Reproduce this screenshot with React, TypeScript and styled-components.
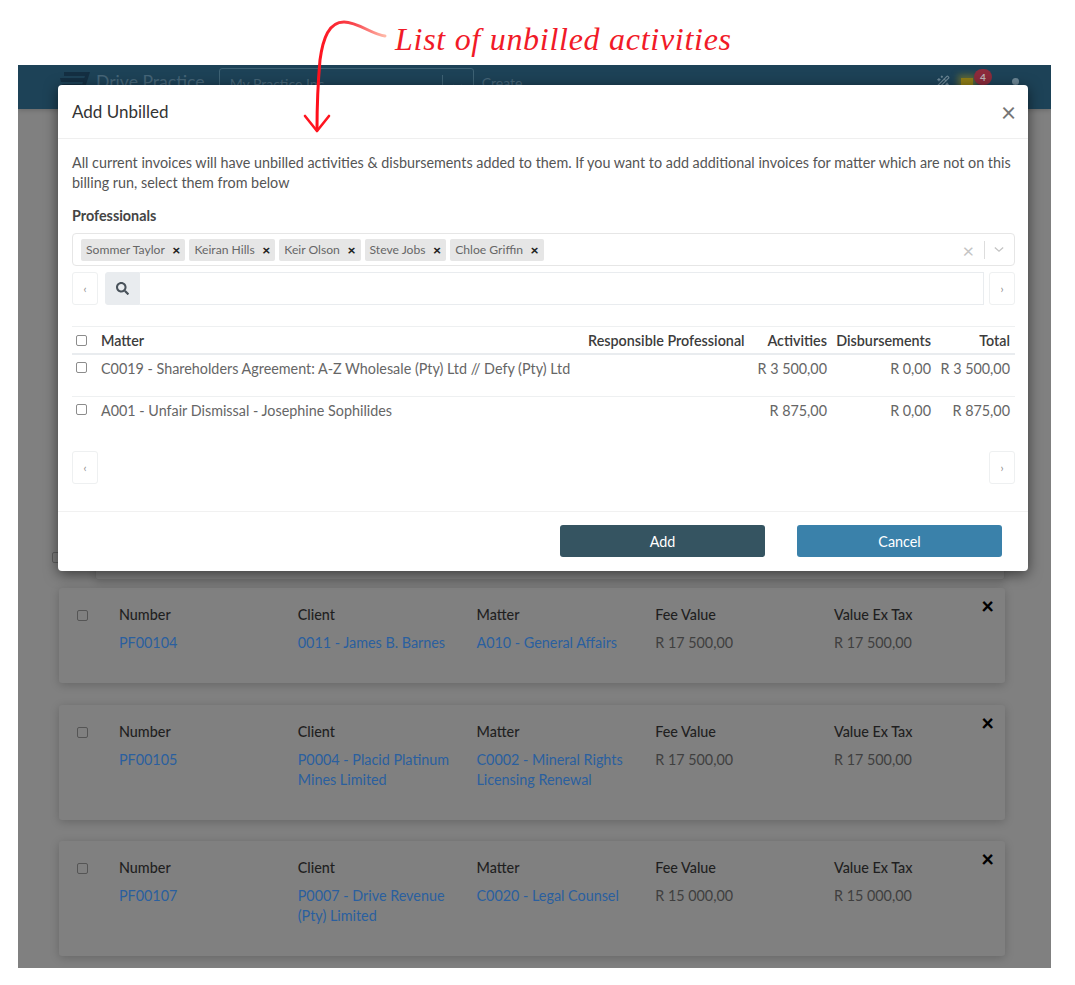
import { createGlobalStyle } from "styled-components"
import styled from "styled-components"
import { Wand2 } from "lucide-react"
import { FaSearch } from "react-icons/fa"

const GlobalStyle = createGlobalStyle`
  html, body { margin: 0; padding: 0; background: #fff; }
  body { font-family: "Lato", "Open Sans", sans-serif; font-size: 14.35px; color: #555; }
  * { box-sizing: border-box; }
`

const PROFESSIONALS = ["Sommer Taylor", "Keiran Hills", "Keir Olson", "Steve Jobs", "Chloe Griffin"]

const UNBILLED = [
    { matter: "C0019 - Shareholders Agreement: A-Z Wholesale (Pty) Ltd // Defy (Pty) Ltd", activities: "R 3 500,00", disbursements: "R 0,00", total: "R 3 500,00" },
    { matter: "A001 - Unfair Dismissal - Josephine Sophilides", activities: "R 875,00", disbursements: "R 0,00", total: "R 875,00" },
]

const INVOICES = [
    { number: "PF00104", client: "0011 - James B. Barnes", matter: "A010 - General Affairs", fee: "R 17 500,00", tall: false },
    { number: "PF00105", client: "P0004 - Placid Platinum Mines Limited", matter: "C0002 - Mineral Rights Licensing Renewal", fee: "R 17 500,00", tall: true },
    { number: "PF00107", client: "P0007 - Drive Revenue (Pty) Limited", matter: "C0020 - Legal Counsel", fee: "R 15 000,00", tall: true },
]

export default function App() {
    return (
        <Page>
            <GlobalStyle />
            <Annotation>List of unbilled activities</Annotation>
            <Frame>
                <Navbar>
                    <Logo viewBox="0 0 30 20" aria-hidden="true">
                        <path d="M4 1H30L27 5H4Z M0 7H26L24 11H1Z M2 13H22L20 17H3Z" fill="#142f42" />
                        <path d="M30 1L24 20H20L25 5Z" fill="#142f42" />
                    </Logo>
                    <Brand>Drive Practice</Brand>
                    <PracticeSelect>
                        <span>My Practice Inc</span>
                        <SelectSplit />
                        <NavChevron viewBox="0 0 12 8" aria-hidden="true">
                            <path d="M1 1L6 6L11 1" />
                        </NavChevron>
                    </PracticeSelect>
                    <CreateLink>Create</CreateLink>
                    <NavIcons>
                        <WandSlot>
                            <Wand2 size={14} color="#6d8796" />
                        </WandSlot>
                        <Bell>
                            <BellGlow />
                            <Badge>4</Badge>
                        </Bell>
                        <UserDot />
                    </NavIcons>
                </Navbar>
                <Content>
                    <TopRow>
                        <TopCheck type="checkbox" readOnly />
                        <TopPanel />
                    </TopRow>
                    {INVOICES.map((row) => (
                        <InvoiceCard key={row.number} $tall={row.tall}>
                            <CardCheck type="checkbox" readOnly />
                            <Field>
                                <FieldLabel>Number</FieldLabel>
                                <FieldLink>{row.number}</FieldLink>
                            </Field>
                            <Field>
                                <FieldLabel>Client</FieldLabel>
                                <FieldLink>{row.client}</FieldLink>
                            </Field>
                            <Field>
                                <FieldLabel>Matter</FieldLabel>
                                <FieldLink>{row.matter}</FieldLink>
                            </Field>
                            <Field>
                                <FieldLabel>Fee Value</FieldLabel>
                                <FieldValue>{row.fee}</FieldValue>
                            </Field>
                            <Field>
                                <FieldLabel>Value Ex Tax</FieldLabel>
                                <FieldValue>{row.fee}</FieldValue>
                            </Field>
                            <CardRemove>×</CardRemove>
                        </InvoiceCard>
                    ))}
                </Content>

                <Modal>
                    <ModalHeader>
                        <ModalTitle>Add Unbilled</ModalTitle>
                        <ModalClose>×</ModalClose>
                    </ModalHeader>
                    <ModalBody>
                        <Intro>
                            All current invoices will have unbilled activities &amp; disbursements added to them. If you want to add additional invoices for matter which are not on this billing run, select them from below
                        </Intro>
                        <SectionLabel>Professionals</SectionLabel>
                        <MultiSelect>
                            <Tags>
                                {PROFESSIONALS.map((name) => (
                                    <Tag key={name}>
                                        {name}
                                        <TagRemove>×</TagRemove>
                                    </Tag>
                                ))}
                            </Tags>
                            <SelectClear>×</SelectClear>
                            <SelectDivider />
                            <SelectChevron viewBox="0 0 12 8" aria-hidden="true">
                                <path d="M1 1.5L6 6L11 1.5" />
                            </SelectChevron>
                        </MultiSelect>
                        <SearchRow>
                            <PageButton>‹</PageButton>
                            <SearchGroup>
                                <SearchAddon>
                                    <FaSearch size={13} color="#49525a" />
                                </SearchAddon>
                                <SearchInput />
                            </SearchGroup>
                            <PageButton>›</PageButton>
                        </SearchRow>
                        <Table>
                            <HeadRow>
                                <RowCheck type="checkbox" readOnly />
                                <span>Matter</span>
                                <span>Responsible Professional</span>
                                <Amount>Activities</Amount>
                                <Amount>Disbursements</Amount>
                                <Amount>Total</Amount>
                            </HeadRow>
                            {UNBILLED.map((row) => (
                                <BodyRow key={row.matter}>
                                    <RowCheck type="checkbox" readOnly />
                                    <span>{row.matter}</span>
                                    <span />
                                    <Amount>{row.activities}</Amount>
                                    <Amount>{row.disbursements}</Amount>
                                    <Amount>{row.total}</Amount>
                                </BodyRow>
                            ))}
                        </Table>
                        <Pager>
                            <PageButton>‹</PageButton>
                            <PageButton>›</PageButton>
                        </Pager>
                    </ModalBody>
                    <ModalFooter>
                        <ActionButton $color="#355461">Add</ActionButton>
                        <ActionButton $color="#3a81aa">Cancel</ActionButton>
                    </ModalFooter>
                </Modal>
            </Frame>

            <Arrow viewBox="0 0 100 120" aria-hidden="true">
                <defs>
                    <linearGradient id="tail" x1="100%" y1="0" x2="0" y2="0">
                        <stop offset="0" stopColor="#ffb9a8" />
                        <stop offset="0.45" stopColor="#f8474f" />
                        <stop offset="1" stopColor="#ff0f1b" />
                    </linearGradient>
                </defs>
                <path d="M85 16C73 15 58 2 44 2C29 2 23 18 20 40C18 62 17 85 17 110" fill="none" stroke="url(#tail)" strokeWidth="3" strokeLinecap="round" />
                <path d="M5 96L17 111L29 96" fill="none" stroke="#ff1520" strokeWidth="2.6" strokeLinecap="round" strokeLinejoin="round" />
            </Arrow>
        </Page>
    )
}

const Page = styled.div`
    position: relative;
    width: 1075px;
    height: 985px;
    padding-left: 18px;
    overflow: hidden;
`

const Annotation = styled.div`
    height: 65px;
    padding: 19px 0 0 377px;
    font-family: "Liberation Serif", serif;
    font-style: italic;
    font-size: 32px;
    line-height: 40px;
    letter-spacing: 0.72px;
    color: #f11a28;
`

const Arrow = styled.svg`
    position: absolute;
    left: 300px;
    top: 20px;
    width: 100px;
    height: 120px;
`

const Frame = styled.div`
    position: relative;
    width: 1033px;
    height: 903px;
    background: #808080;
    overflow: hidden;
`

const Navbar = styled.div`
    display: flex;
    align-items: flex-start;
    height: 44px;
    padding: 3px 0 0 42px;
    background: #1d4257;
    box-shadow: 0 1px 5px rgba(0, 0, 0, 0.2);
`

const Logo = styled.svg`
    width: 30px;
    height: 20px;
    margin-top: 3px;
`

const Brand = styled.span`
    margin-left: 6px;
    padding-top: 1px;
    font-size: 17.6px;
    line-height: 26px;
    color: #456577;
`

const PracticeSelect = styled.div`
    display: flex;
    align-items: flex-start;
    width: 255px;
    height: 34px;
    margin-left: 14px;
    padding: 6px 0 0 10px;
    border: 1px solid #3e6274;
    border-radius: 3px;
    font-size: 14px;
    color: #456577;
    span:first-child { flex: 1; }
`

const SelectSplit = styled.i`
    width: 1px;
    height: 24px;
    background: #3e6274;
`

const NavChevron = styled.svg`
    width: 11px;
    height: 8px;
    margin: 9px 10px 0 9px;
    path { fill: none; stroke: #4a6a7b; stroke-width: 2; }
`

const CreateLink = styled.span`
    margin-left: 8px;
    padding-top: 6px;
    font-size: 14px;
    color: #456577;
`

const NavIcons = styled.div`
    display: flex;
    align-items: flex-start;
    margin-left: auto;
    padding-right: 32px;
`

const WandSlot = styled.div`
    margin-top: 7px;
`

const Bell = styled.div`
    position: relative;
    width: 22px;
    height: 20px;
    margin: 0 27px 0 13px;
`

const BellGlow = styled.div`
    position: absolute;
    left: -2px;
    top: 10px;
    width: 12px;
    height: 10px;
    background: #8f7d16;
    box-shadow: 0 0 6px 3px rgba(130, 125, 40, 0.7);
`

const Badge = styled.b`
    position: absolute;
    left: 11px;
    top: 1px;
    width: 18px;
    height: 16px;
    border-radius: 9px;
    background: #8c2b3b;
    font-size: 10px;
    line-height: 16px;
    text-align: center;
    color: #b9b2b4;
`

const UserDot = styled.div`
    width: 7px;
    height: 7px;
    margin-top: 10px;
    border-radius: 50%;
    background: #6d8796;
`

const Content = styled.div`
    display: flex;
    flex-direction: column;
    gap: 21.5px;
    padding: 0 46px 0 41px;
`

const TopRow = styled.div`
    display: flex;
    gap: 32px;
    height: 471px;
    margin-bottom: -13.5px;
    margin-left: -7px;
`

const TopCheck = styled.input`
    appearance: none;
    flex: none;
    align-self: flex-end;
    width: 11px;
    height: 11px;
    margin: 0 0 17px;
    border: 1px solid #5f5f5f;
    border-radius: 2px;
`

const TopPanel = styled.div`
    flex: 1;
    border: 1px solid #747474;
    border-radius: 3px;
    box-shadow: 0 3px 9px rgba(0, 0, 0, 0.14);
`

const InvoiceCard = styled.div<{ $tall: boolean }>`
    position: relative;
    display: grid;
    grid-template-columns: 60px repeat(4, 178.75px) 1fr;
    align-items: start;
    height: ${(p) => (p.$tall ? 115 : 95)}px;
    padding-top: 17px;
    border-radius: 3px;
    background: #808080;
    box-shadow: 0 2px 10px rgba(0, 0, 0, 0.2);
`

const CardCheck = styled.input`
    appearance: none;
    width: 11px;
    height: 11px;
    margin: 5px 0 0 18px;
    border: 1px solid #555;
    border-radius: 2px;
`

const Field = styled.div`
    padding-right: 22px;
`

const FieldLabel = styled.div`
    margin-bottom: 8px;
    font-weight: 500;
    line-height: 20px;
    color: #1f1f1f;
`

const FieldLink = styled.div`
    line-height: 20px;
    color: #2a5f9f;
`

const FieldValue = styled.div`
    line-height: 20px;
    color: #3f3f3f;
`

const CardRemove = styled.span`
    position: absolute;
    right: 11px;
    top: 9px;
    font-size: 22px;
    font-weight: 900;
    line-height: 18px;
    color: #000;
`

const Modal = styled.div`
    position: absolute;
    left: 40px;
    top: 20px;
    display: flex;
    flex-direction: column;
    width: 970px;
    height: 486px;
    border-radius: 4px;
    background: #fff;
    box-shadow: 0 3px 14px rgba(0, 0, 0, 0.55);
`

const ModalHeader = styled.div`
    display: flex;
    align-items: center;
    justify-content: space-between;
    height: 54px;
    padding: 0 12px 0 14px;
    border-bottom: 1px solid #efefef;
`

const ModalTitle = styled.div`
    font-size: 17px;
    color: #333;
`

const ModalClose = styled.span`
    font-size: 26px;
    line-height: 24px;
    color: #757575;
`

const ModalBody = styled.div`
    flex: 1;
    padding: 14px 13px 0 14px;
`

const Intro = styled.div`
    line-height: 20px;
    color: #555;
`

const SectionLabel = styled.div`
    margin-top: 13px;
    font-weight: 700;
    line-height: 20px;
    color: #444;
`

const MultiSelect = styled.div`
    display: flex;
    align-items: center;
    height: 33px;
    margin-top: 7px;
    padding: 0 8px;
    border: 1px solid #e6e6e6;
    border-radius: 4px;
`

const Tags = styled.div`
    display: flex;
    flex: 1;
    gap: 4px;
`

const Tag = styled.span`
    display: flex;
    align-items: center;
    height: 22px;
    padding: 0 5px;
    border-radius: 2px;
    background: #e6e6e6;
    font-size: 12.15px;
    color: #666;
`

const TagRemove = styled.b`
    margin-left: 7.5px;
    font-size: 14px;
    font-weight: 900;
    color: #222;
`

const SelectClear = styled.span`
    font-size: 20px;
    color: #c4c4c4;
`

const SelectDivider = styled.i`
    width: 1px;
    height: 18px;
    margin: 0 9px 0 10px;
    background: #ddd;
`

const SelectChevron = styled.svg`
    width: 10px;
    height: 7px;
    margin-right: 2px;
    path { fill: none; stroke: #c4c4c4; stroke-width: 1.6; }
`

const SearchRow = styled.div`
    display: flex;
    gap: 7px;
    margin-top: 6px;
`

const PageButton = styled.button`
    flex: none;
    width: 26px;
    height: 33px;
    padding: 0;
    border: 1px solid #eef0f1;
    border-radius: 3px;
    background: #fff;
    font-family: inherit;
    font-size: 11px;
    color: #8b8b8b;
`

const SearchGroup = styled.div`
    display: flex;
    flex: 1;
    margin-right: -2px;
`

const SearchAddon = styled.div`
    display: flex;
    align-items: center;
    justify-content: center;
    width: 35px;
    border: 1px solid #e9ecef;
    border-radius: 3px 0 0 3px;
    background: #e9ecef;
`

const SearchInput = styled.div`
    flex: 1;
    border: 1px solid #e9ecef;
    border-left: 0;
`

const Table = styled.div`
    margin-top: 21px;
    border-top: 1px solid #eef0f1;
`

const columns = "29px 487px 157px 82px 104px 1fr"

const HeadRow = styled.div`
    display: grid;
    grid-template-columns: ${columns};
    align-items: center;
    height: 28px;
    padding-right: 5px;
    border-bottom: 2px solid #e9ecef;
    font-weight: 600;
    white-space: nowrap;
    color: #3c3c3c;
`

const BodyRow = styled.div`
    display: grid;
    grid-template-columns: ${columns};
    align-items: start;
    height: 42px;
    padding: 4px 5px 0 0;
    border-bottom: 1px solid #eef0f1;
    line-height: 20px;
    white-space: nowrap;
    color: #666;
    &:last-child { border-bottom: 0; }
`

const RowCheck = styled.input`
    appearance: none;
    width: 11px;
    height: 11px;
    margin: 3px 0 0 4px;
    border: 1px solid #8c8c8c;
    border-radius: 2px;
    ${HeadRow} & { margin-top: 0; }
`

const Amount = styled.span`
    text-align: right;
`

const Pager = styled.div`
    display: flex;
    justify-content: space-between;
    margin-top: 12px;
`

const ModalFooter = styled.div`
    display: flex;
    justify-content: flex-end;
    gap: 32px;
    height: 60px;
    padding: 13px 26px 0 0;
    border-top: 1px solid #f1f1f1;
`

const ActionButton = styled.button<{ $color: string }>`
    width: 205px;
    height: 32px;
    padding: 0;
    border: 0;
    border-radius: 3px;
    background: ${(p) => p.$color};
    font-family: inherit;
    font-size: 14.35px;
    color: #fff;
`
